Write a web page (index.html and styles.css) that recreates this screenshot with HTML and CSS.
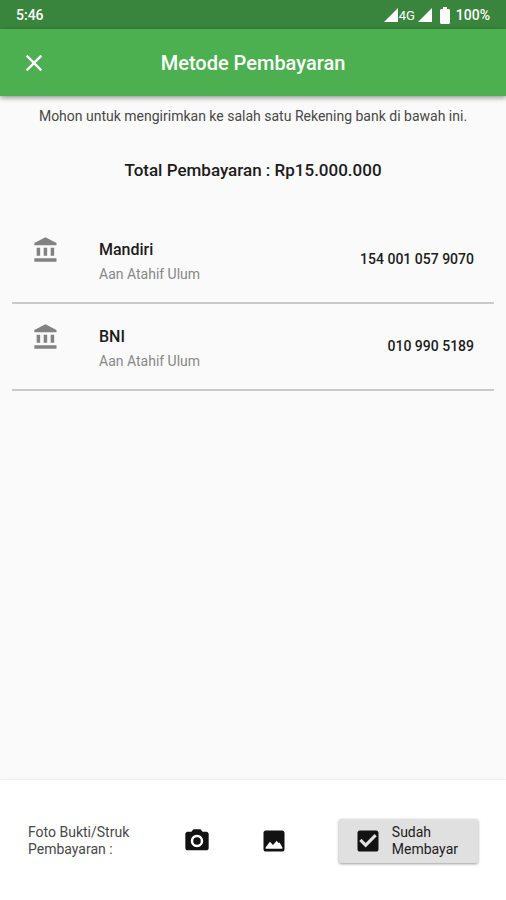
FILE: index.html
```html
<!DOCTYPE html>
<html lang="id">
<head>
<meta charset="utf-8">
<meta name="viewport" content="width=device-width, initial-scale=1">
<title>Metode Pembayaran</title>
<link rel="stylesheet" href="styles.css">
</head>
<body>
<div class="status">
  <span>5:46</span>
  <div class="status-right">
    <svg class="signal" viewBox="0 0 15 15"><path d="M15 0v15H0z"/></svg>
    <span class="network">4G</span>
    <svg class="signal" viewBox="0 0 15 15"><path d="M15 0v15H0z"/></svg>
    <svg class="battery" viewBox="0 0 10 17"><path d="M3 0h4v2h2l1 1v13l-1 1H1l-1-1V3l1-1h2z"/></svg>
    <span>100%</span>
  </div>
</div>
<header class="appbar">
  <button class="icon-button" type="button" aria-label="Tutup">
    <svg class="icon" viewBox="0 0 24 24"><path d="M19 6.41 17.59 5 12 10.59 6.41 5 5 6.41 10.59 12 5 17.59 6.41 19 12 13.41 17.59 19 19 17.59 13.41 12z"/></svg>
  </button>
  <h1>Metode Pembayaran</h1>
</header>
<main>
  <p class="intro">Mohon untuk mengirimkan ke salah satu Rekening bank di bawah ini.</p>
  <p class="total">Total Pembayaran : Rp15.000.000</p>
  <ul class="banks">
    <li class="bank">
      <svg class="icon" viewBox="0 0 24 24"><path d="M4 10v7h3v-7H4zm6 0v7h3v-7h-3zM2 22h19v-3H2v3zm14-12v7h3v-7h-3zm-4.500-9L2 6v2h19V6l-9.500-5z"/></svg>
      <div class="account">
        <h2>Mandiri</h2>
        <p>Aan Atahif Ulum</p>
      </div>
      <span class="number">154 001 057 9070</span>
    </li>
    <li class="bank">
      <svg class="icon" viewBox="0 0 24 24"><path d="M4 10v7h3v-7H4zm6 0v7h3v-7h-3zM2 22h19v-3H2v3zm14-12v7h3v-7h-3zm-4.500-9L2 6v2h19V6l-9.500-5z"/></svg>
      <div class="account">
        <h2>BNI</h2>
        <p>Aan Atahif Ulum</p>
      </div>
      <span class="number">010 990 5189</span>
    </li>
  </ul>
</main>
<footer>
  <p class="proof">Foto Bukti/Struk Pembayaran :</p>
  <div class="sources">
    <button class="icon-button" type="button" aria-label="Kamera">
      <svg class="icon" viewBox="0 0 24 24"><circle cx="12" cy="12" r="3.200"/><path d="M9 2 7.170 4H4c-1.100 0-2 .9-2 2v12c0 1.100.9 2 2 2h16c1.100 0 2-.9 2-2V6c0-1.100-.9-2-2-2h-3.170L15 2H9zm3 15.300c-2.930 0-5.300-2.370-5.300-5.300s2.370-5.300 5.300-5.300 5.300 2.370 5.300 5.300-2.370 5.300-5.300 5.300z"/></svg>
    </button>
    <button class="icon-button" type="button" aria-label="Galeri">
      <svg class="icon" viewBox="0 0 24 24"><path d="M21 19V5c0-1.100-.9-2-2-2H5c-1.100 0-2 .9-2 2v14c0 1.100.9 2 2 2h14c1.100 0 2-.9 2-2zM4.800 18.600v-1l3.700-5 2.600 2.800 3.200-3.700 1.500 2 1-.5 2.400 4.400v1z"/></svg>
    </button>
  </div>
  <button class="paid" type="button">
    <svg class="icon" viewBox="0 0 24 24"><path d="M19 3H5c-1.110 0-2 .9-2 2v14c0 1.100.89 2 2 2h14c1.110 0 2-.9 2-2V5c0-1.100-.89-2-2-2zm-9 14.500L4.500 12l1.900-1.900 3.600 3.600 7.600-7.600 1.900 1.900-9.500 9.500z"/></svg>
    <span>Sudah<br>Membayar</span>
  </button>
</footer>
</body>
</html>
```
FILE: styles.css
```css
* { box-sizing: border-box; }

body {
  margin: 0;
  min-height: 100vh;
  display: flex;
  flex-direction: column;
  background: #fafafa;
  color: #1c1c1c;
  font: 14px/17px Roboto, sans-serif;
}

h1, h2, p, ul { margin: 0; padding: 0; }

svg { display: block; fill: currentColor; flex: none; }

.icon { width: 28px; height: 28px; }

.icon-button {
  padding: 0;
  border: 0;
  background: none;
  color: inherit;
}

.status {
  display: flex;
  justify-content: space-between;
  align-items: center;
  padding: 1px 16px 0;
  height: 29px;
  background: #3a853d;
  color: #fff;
  font-weight: 500;
}

.status-right { display: flex; align-items: center; }
.signal { width: 14px; height: 14px; }
.network { margin: 0 3px 0 1px; font-size: 13px; font-weight: 400; }
.battery { width: 10px; height: 17px; margin: 0 6px 0 8px; }

.appbar {
  display: grid;
  grid-template-columns: 28px 1fr 28px;
  align-items: center;
  height: 67px;
  padding: 1px 20px 0;
  background: #4caf50;
  color: #fff;
  box-shadow: 0 2px 5px rgba(0, 0, 0, 0.4);
}

.appbar h1 {
  font-size: 20px;
  line-height: 24px;
  font-weight: 500;
  text-align: center;
}

main { flex: 1; padding: 12px 12px 0; }

.intro { text-align: center; color: #484848; }

.total {
  margin-top: 33px;
  font-size: 17px;
  line-height: 24px;
  font-weight: 500;
  text-align: center;
}

.banks { margin-top: 35px; list-style: none; }

.bank {
  display: flex;
  align-items: center;
  height: 87px;
  padding: 0 20px;
  border-bottom: 2px solid #cacaca;
}

.bank .icon { margin-bottom: 20px; color: #828282; }

.account { flex: 1; margin-left: 39px; padding-top: 4px; }

.account h2 { font-size: 16px; line-height: 24px; font-weight: 500; }

.account p { line-height: 24px; color: #888; }

.number { font-weight: 500; }

footer {
  display: flex;
  align-items: center;
  height: 120px;
  padding: 2px 28px 0;
  background: #fff;
  box-shadow: 0 0 2px rgba(0, 0, 0, 0.15);
}

footer .icon { color: #121212; }

.proof { width: 120px; color: #484848; }

.sources {
  flex: 1;
  display: flex;
  gap: 49px;
  padding-left: 35px;
}

.paid {
  display: flex;
  align-items: center;
  gap: 10px;
  height: 44px;
  padding: 0 20px 0 15px;
  border: 0;
  border-radius: 2px;
  background: #e0e0e0;
  color: #1c1c1c;
  font: inherit;
  text-align: left;
  box-shadow: 0 1px 3px rgba(0, 0, 0, 0.4);
}
```
